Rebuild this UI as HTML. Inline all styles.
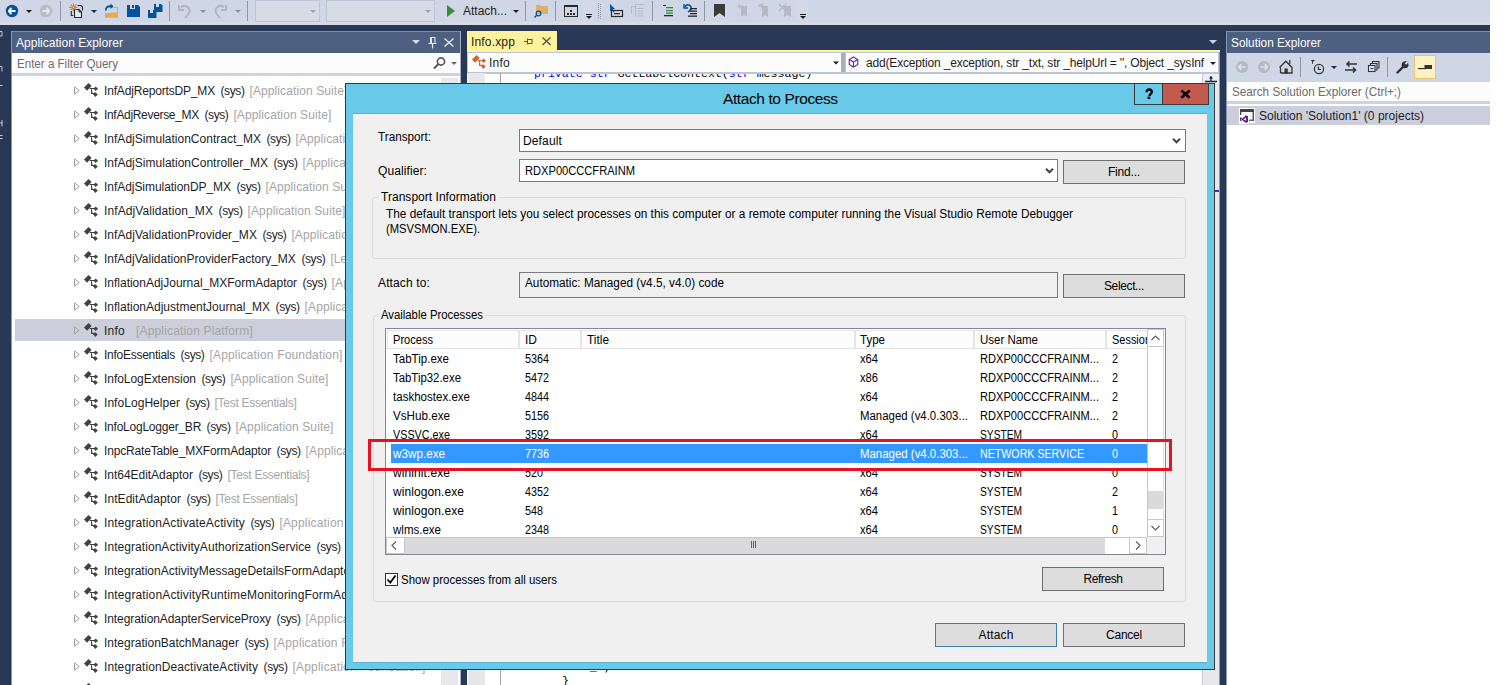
<!DOCTYPE html>
<html><head><meta charset="utf-8">
<style>
*{box-sizing:border-box;margin:0;padding:0}
html,body{width:1512px;height:685px;overflow:hidden;background:#fff;font-family:"Liberation Sans",sans-serif;font-size:12px;color:#1e1e1e}
.a{position:absolute}
#app{position:absolute;left:0;top:0;width:1490px;height:685px;background:#293955;overflow:hidden}
.ti{position:absolute;height:24px;line-height:24px;color:#1e1e1e;white-space:nowrap}
.ti .g{color:#a5a5a5}
.lbl{position:absolute;white-space:nowrap;color:#000}
.lv{position:absolute;white-space:nowrap;color:#000}
.btn{position:absolute;background:#dddddd;border:1px solid #707070;text-align:center;color:#000}
</style></head><body>
<div id="app">
<div class="a" style="left:0;top:0;width:1490px;height:25px;background:#cfd6e5"></div>
<svg class="a" style="left:0;top:0" width="1490" height="25" viewBox="0 0 1490 25">
<rect x="0" y="22" width="1490" height="3" fill="#d6dbe7"></rect>
<!-- back -->
<circle cx="12" cy="11" r="6.2" fill="#00539c"></circle>
<path d="M8.5 11h7M8.5 11l3-3M8.5 11l3 3" stroke="#fff" stroke-width="1.8" fill="none"></path>
<path d="M26 10h6l-3 3z" fill="#1e1e1e"></path>
<circle cx="46" cy="11" r="6.2" fill="#b6bcc8"></circle>
<path d="M49.5 11h-7M49.5 11l-3-3M49.5 11l-3 3" stroke="#e4e7ee" stroke-width="1.8" fill="none"></path>
<rect x="60" y="1" width="1" height="20" fill="#8f97a6"></rect>
<!-- new project -->
<path d="M77.5 5.5h3.5l1.5 1.5v3.5" fill="none" stroke="#2a2a2a" stroke-width="1.1"></path>
<path d="M71.3 11v4.5h2" fill="none" stroke="#2a2a2a" stroke-width="1.1"></path>
<path d="M74.5 9.5h4.5l2.5 2.5v5.5h-7z" fill="#e6e8f0" stroke="#2a2a2a" stroke-width="1.1"></path>
<path d="M79 9.5v2.5h2.5" fill="none" stroke="#2a2a2a" stroke-width="1"></path>
<g stroke="#c27d1a" stroke-width="1.1"><path d="M73.4 3.5v2M73.4 9.3v2M69.5 7.4h2M75.3 7.4h2M70.7 4.7l1.2 1.2M74.9 8.9l1.2 1.2M70.7 10.1l1.2-1.2M74.9 5.9l1.2-1.2"></path></g>
<circle cx="73.4" cy="7.4" r="1.4" fill="none" stroke="#c27d1a" stroke-width="1.1"></circle>
<path d="M91 10h6l-3 3z" fill="#1c2a48"></path>
<!-- open -->
<path d="M112 7.5h5.5v10" fill="none" stroke="#dcac5a" stroke-width="1.1"></path>
<path d="M105 13h6l1 -0.5h5.5v5.3H105z" fill="#e3ab52"></path>
<path d="M106 10.5c-0.5-3 1.5-4.5 5-4.2" fill="none" stroke="#00539c" stroke-width="1.8"></path>
<path d="M110.5 3.5l3 2.8-3 2.8z" fill="#00539c"></path>
<!-- save -->
<path d="M127 5h11l2 2v10h-13z" fill="#00539c"></path>
<rect x="130" y="5" width="5" height="4" fill="#cfd6e5"></rect><rect x="132" y="5" width="2" height="3" fill="#00539c"></rect>
<!-- save all -->
<path d="M154 4h7l1.5 1.5v6.5h-8.5z" fill="#00539c"></path>
<rect x="156" y="4" width="3" height="3" fill="#cfd6e5"></rect>
<path d="M148 10h7l1.5 1.5v6.5h-8.5z" fill="#00539c"></path>
<rect x="150" y="10" width="3" height="3" fill="#cfd6e5"></rect>
<rect x="169" y="1" width="1" height="20" fill="#8f97a6"></rect>
<!-- undo -->
<path d="M181 7c5-3 10 1 8 6l-4 5" fill="none" stroke="#b0b6c2" stroke-width="2"></path>
<path d="M179 5v5h5" fill="none" stroke="#b0b6c2" stroke-width="2"></path>
<path d="M200 10h6l-3 3z" fill="#8a8f99"></path>
<path d="M224 7c-5-3-10 1-8 6l4 5" fill="none" stroke="#b0b6c2" stroke-width="2"></path>
<path d="M226 5v5h-5" fill="none" stroke="#b0b6c2" stroke-width="2"></path>
<path d="M235 10h6l-3 3z" fill="#8a8f99"></path>
<rect x="247" y="1" width="1" height="20" fill="#8f97a6"></rect>
<!-- combos -->
<rect x="255.5" y="0.5" width="64" height="21" fill="#d6dbe6" stroke="#bdc5d6"></rect>
<path d="M310 10h6l-3 3z" fill="#9aa1ad"></path>
<rect x="326.5" y="0.5" width="108" height="21" fill="#d6dbe6" stroke="#bdc5d6"></rect>
<path d="M425 10h6l-3 3z" fill="#9aa1ad"></path>
<!-- play -->
<path d="M447 5l8 6-8 6z" fill="#388a34"></path>
<path d="M513 10h6l-3 3z" fill="#1e1e1e"></path>
<rect x="525" y="1" width="1" height="20" fill="#8f97a6"></rect>
<!-- folder search -->
<path d="M536 5h4l1 1h7v8h-12z" fill="#dcb067"></path>
<circle cx="538.5" cy="13.5" r="2.3" fill="none" stroke="#00539c" stroke-width="1.3"></circle>
<path d="M537 15l-2.5 2.5" stroke="#00539c" stroke-width="1.5"></path>
<rect x="555" y="1" width="1" height="20" fill="#8f97a6"></rect>
<!-- window icon -->
<rect x="564.5" y="5.5" width="13" height="11" fill="none" stroke="#2a2a2a"></rect>
<rect x="564" y="5" width="14" height="2" fill="#2a2a2a"></rect>
<rect x="570" y="10" width="2" height="2" fill="#2a2a2a"></rect><rect x="567" y="13" width="2" height="2" fill="#2a2a2a"></rect><rect x="570" y="13" width="2" height="2" fill="#2a2a2a"></rect><rect x="573" y="13" width="2" height="2" fill="#2a2a2a"></rect>
<rect x="583" y="0" width="11" height="23" fill="#d3d9e6"></rect>
<rect x="586" y="14" width="6" height="1" fill="#1e1e1e"></rect><path d="M586 16h6l-3 3z" fill="#1e1e1e"></path>
<!-- gripper -->
<g fill="#8f97a6"><rect x="598" y="3" width="1" height="1"></rect><rect x="600" y="4" width="1" height="1"></rect><rect x="598" y="5" width="1" height="1"></rect><rect x="600" y="6" width="1" height="1"></rect><rect x="598" y="7" width="1" height="1"></rect><rect x="600" y="8" width="1" height="1"></rect><rect x="598" y="9" width="1" height="1"></rect><rect x="600" y="10" width="1" height="1"></rect><rect x="598" y="11" width="1" height="1"></rect><rect x="600" y="12" width="1" height="1"></rect><rect x="598" y="13" width="1" height="1"></rect><rect x="600" y="14" width="1" height="1"></rect><rect x="598" y="15" width="1" height="1"></rect><rect x="600" y="16" width="1" height="1"></rect><rect x="598" y="17" width="1" height="1"></rect><rect x="600" y="18" width="1" height="1"></rect></g>
<!-- cursor icon -->
<path d="M610 4l5 5-2 0 1.5 3-1 .5-1.5-3-2 2z" fill="#00539c"></path>
<rect x="611.5" y="10.5" width="11" height="6" fill="none" stroke="#2a2a2a" stroke-width="1.2"></rect>
<rect x="614" y="13" width="6" height="1.2" fill="#2a2a2a"></rect>
<!-- disabled list -->
<g fill="none" stroke="#b5bbc6"><path d="M631.5 6.5v7M631.5 6.5h4M635.5 4.5h8M637.5 8.5h6M637.5 11h6M637.5 13.5h6M637.5 16h6M635.5 4.5v12"></path></g>
<rect x="652" y="1" width="1" height="20" fill="#8f97a6"></rect>
<!-- indent -->
<g fill="#2a2a2a"><rect x="663" y="5" width="3" height="1"></rect><rect x="664" y="15" width="9" height="1.3"></rect></g>
<g fill="#388a34"><rect x="666" y="7" width="7" height="1.3"></rect><rect x="666" y="10" width="7" height="1.3"></rect><rect x="666" y="12.5" width="7" height="1.3"></rect></g>
<!-- undo indent -->
<path d="M685 7c1-3 5-3 6 0s-2 4-3 5" fill="none" stroke="#00539c" stroke-width="1.6"></path>
<path d="M684 4v4h4" fill="none" stroke="#00539c" stroke-width="1.4"></path>
<g fill="#2a2a2a"><rect x="690" y="8" width="7" height="1.3"></rect><rect x="690" y="10.5" width="7" height="1.3"></rect><rect x="690" y="13" width="7" height="1.3"></rect><rect x="688" y="15.5" width="9" height="1.3"></rect></g>
<rect x="704" y="1" width="1" height="20" fill="#8f97a6"></rect>
<!-- bookmark -->
<path d="M714 4h11v13l-5.5-4-5.5 4z" fill="#3b3b3b"></path>
<g fill="#b5bbc6"><path d="M741 6h6v11l-3-2-3 2z"></path><path d="M737 6l3-2v1.5h3v2h-3V9z"></path>
<path d="M762 6h6v11l-3-2-3 2z"></path><path d="M764 5l-3-2v1.5h-3v2h3V8z"></path>
<path d="M784 6h7v11l-3.5-2-3.5 2z"></path><path d="M779 4l7 7" stroke="#b5bbc6" stroke-width="1.4"></path><path d="M786 4l-7 7" stroke="#b5bbc6" stroke-width="1.4"></path></g>
<rect x="797" y="0" width="11" height="23" fill="#d3d9e6"></rect>
<rect x="800" y="14" width="6" height="1" fill="#1e1e1e"></rect><path d="M800 16h6l-3 3z" fill="#1e1e1e"></path>
</svg>

<div class="a" style="left: 463px; top: 4px; font-size: 12px; color: rgb(30, 30, 30); white-space: nowrap; transform: scaleX(0.9993); transform-origin: 0px 0px;">Attach...</div>

<svg class="a" style="left:0;top:25px" width="4" height="120" viewBox="0 25 4 120"><g fill="none" stroke="#c3c9d6" stroke-width="1"><path d="M0 31.5h2v4.5h-2"></path><path d="M0 66.5h2v5"></path><path d="M0 85.5h2.5"></path><path d="M0 123h2.5M2 120v6.5"></path><path d="M0 135.5h2.5M0 138.5h2.5"></path></g></svg>
<!-- Application Explorer -->
<div class="a" style="left:11px;top:31px;width:450px;height:654px;background:#fff;border-left:1px solid #8796b4;border-right:1px solid #a4b0c8;overflow:hidden">
  <div class="a" style="left:0;top:0;width:449px;height:22px;background:#4d6082;border-top:1px solid #7e8eae"></div>
  <div class="a" style="left: 4px; top: 5px; color: rgb(255, 255, 255); white-space: nowrap; letter-spacing: 0.01px;">Application Explorer</div>
  <svg class="a" style="left:400px;top:0" width="50" height="22" viewBox="0 0 50 22">
    <path d="M0 9h8l-4 4z" fill="#d5dae4"></path>
    <path d="M18.5 6.5h4.5v6h-4.5z" fill="none" stroke="#e6e9ef" stroke-width="1.1"></path><rect x="18" y="6" width="2" height="6.5" fill="#e6e9ef"></rect><path d="M16.5 12.5h8M20.5 12.5v5" stroke="#e6e9ef" stroke-width="1.2"></path>
    <path d="M32.5 7.5l9 8M41.5 7.5l-9 8" stroke="#e6e9ef" stroke-width="1.4"></path>
  </svg>
  <div class="a" style="left:1px;top:22px;width:447px;height:20px;background:#fcfcfc"></div>
  <div class="a" style="left: 5px; top: 26px; color: rgb(109, 109, 109); white-space: nowrap; transform: scaleX(0.9646); transform-origin: 0px 0px;">Enter a Filter Query</div>
  <svg class="a" style="left:420px;top:22px" width="28" height="20" viewBox="0 0 28 20">
    <circle cx="9" cy="8.5" r="3.6" fill="none" stroke="#555" stroke-width="1.6"></circle><path d="M6.5 11l-4.5 4.5" stroke="#555" stroke-width="2"></path>
    <path d="M19 9h6l-3 3z" fill="#666"></path>
  </svg>
  <div class="a" style="left:0;top:42px;width:448px;height:3px;background:#ccd3e2"></div>
  <div class="a" style="left:429px;top:47px;width:17px;height:607px;background:#e8e8ec"></div>
  
<div class="a" style="left:0;top:47px;width:449px;height:24px"><svg class="a" style="left:62px;top:8px" width="6" height="9" viewBox="0 0 6 9"><path d="M0.5 0.8v7.4l4.6-3.7z" fill="none" stroke="#a0a0a0" stroke-width="1"></path></svg><svg class="a" style="left:71px;top:4px" width="16" height="16" viewBox="0 0 16 16"><path d="M5.6 0.95L8.65 4L4 8.65L0.95 5.6z" fill="#424242"></path><path d="M6.7 6.5H12.5M8.6 6.5V11.4H12" fill="none" stroke="#424242" stroke-width="1.1"></path><path d="M12.7 4.5l2.3 2.3-2.3 2.3-2.3-2.3z" fill="#424242"></path><path d="M12.4 10.3l2.3 2.3-2.3 2.3-2.3-2.3z" fill="#424242"></path></svg><div class="ti" style="left: 92px; top: 1px; letter-spacing: -0.17px;">InfAdjReportsDP_MX<span style="margin-left: 5.5px; letter-spacing: -0.4px;">(sys)</span><span class="g" style="margin-left: 5px; letter-spacing: 0.1px;">[Application Suite]</span></div></div>
<div class="a" style="left:0;top:71px;width:449px;height:24px"><svg class="a" style="left:62px;top:8px" width="6" height="9" viewBox="0 0 6 9"><path d="M0.5 0.8v7.4l4.6-3.7z" fill="none" stroke="#a0a0a0" stroke-width="1"></path></svg><svg class="a" style="left:71px;top:4px" width="16" height="16" viewBox="0 0 16 16"><path d="M5.6 0.95L8.65 4L4 8.65L0.95 5.6z" fill="#424242"></path><path d="M6.7 6.5H12.5M8.6 6.5V11.4H12" fill="none" stroke="#424242" stroke-width="1.1"></path><path d="M12.7 4.5l2.3 2.3-2.3 2.3-2.3-2.3z" fill="#424242"></path><path d="M12.4 10.3l2.3 2.3-2.3 2.3-2.3-2.3z" fill="#424242"></path></svg><div class="ti" style="left: 92px; top: 1px; letter-spacing: -0.32px;">InfAdjReverse_MX<span style="margin-left: 5.5px; letter-spacing: -0.4px;">(sys)</span><span class="g" style="margin-left: 5px; letter-spacing: 0.1px;">[Application Suite]</span></div></div>
<div class="a" style="left:0;top:95px;width:449px;height:24px"><svg class="a" style="left:62px;top:8px" width="6" height="9" viewBox="0 0 6 9"><path d="M0.5 0.8v7.4l4.6-3.7z" fill="none" stroke="#a0a0a0" stroke-width="1"></path></svg><svg class="a" style="left:71px;top:4px" width="16" height="16" viewBox="0 0 16 16"><path d="M5.6 0.95L8.65 4L4 8.65L0.95 5.6z" fill="#424242"></path><path d="M6.7 6.5H12.5M8.6 6.5V11.4H12" fill="none" stroke="#424242" stroke-width="1.1"></path><path d="M12.7 4.5l2.3 2.3-2.3 2.3-2.3-2.3z" fill="#424242"></path><path d="M12.4 10.3l2.3 2.3-2.3 2.3-2.3-2.3z" fill="#424242"></path></svg><div class="ti" style="left: 92px; top: 1px; letter-spacing: 0.01px;">InfAdjSimulationContract_MX<span style="margin-left: 5.5px; letter-spacing: -0.4px;">(sys)</span><span class="g" style="margin-left: 5px; letter-spacing: 0.1px;">[Application Suite]</span></div></div>
<div class="a" style="left:0;top:119px;width:449px;height:24px"><svg class="a" style="left:62px;top:8px" width="6" height="9" viewBox="0 0 6 9"><path d="M0.5 0.8v7.4l4.6-3.7z" fill="none" stroke="#a0a0a0" stroke-width="1"></path></svg><svg class="a" style="left:71px;top:4px" width="16" height="16" viewBox="0 0 16 16"><path d="M5.6 0.95L8.65 4L4 8.65L0.95 5.6z" fill="#424242"></path><path d="M6.7 6.5H12.5M8.6 6.5V11.4H12" fill="none" stroke="#424242" stroke-width="1.1"></path><path d="M12.7 4.5l2.3 2.3-2.3 2.3-2.3-2.3z" fill="#424242"></path><path d="M12.4 10.3l2.3 2.3-2.3 2.3-2.3-2.3z" fill="#424242"></path></svg><div class="ti" style="left: 92px; top: 1px; letter-spacing: 0.02px;">InfAdjSimulationController_MX<span style="margin-left: 5.5px; letter-spacing: -0.4px;">(sys)</span><span class="g" style="margin-left: 5px; letter-spacing: 0.1px;">[Application Suite]</span></div></div>
<div class="a" style="left:0;top:143px;width:449px;height:24px"><svg class="a" style="left:62px;top:8px" width="6" height="9" viewBox="0 0 6 9"><path d="M0.5 0.8v7.4l4.6-3.7z" fill="none" stroke="#a0a0a0" stroke-width="1"></path></svg><svg class="a" style="left:71px;top:4px" width="16" height="16" viewBox="0 0 16 16"><path d="M5.6 0.95L8.65 4L4 8.65L0.95 5.6z" fill="#424242"></path><path d="M6.7 6.5H12.5M8.6 6.5V11.4H12" fill="none" stroke="#424242" stroke-width="1.1"></path><path d="M12.7 4.5l2.3 2.3-2.3 2.3-2.3-2.3z" fill="#424242"></path><path d="M12.4 10.3l2.3 2.3-2.3 2.3-2.3-2.3z" fill="#424242"></path></svg><div class="ti" style="left: 92px; top: 1px; letter-spacing: -0.05px;">InfAdjSimulationDP_MX<span style="margin-left: 5.5px; letter-spacing: -0.4px;">(sys)</span><span class="g" style="margin-left: 5px; letter-spacing: 0.1px;">[Application Suite]</span></div></div>
<div class="a" style="left:0;top:167px;width:449px;height:24px"><svg class="a" style="left:62px;top:8px" width="6" height="9" viewBox="0 0 6 9"><path d="M0.5 0.8v7.4l4.6-3.7z" fill="none" stroke="#a0a0a0" stroke-width="1"></path></svg><svg class="a" style="left:71px;top:4px" width="16" height="16" viewBox="0 0 16 16"><path d="M5.6 0.95L8.65 4L4 8.65L0.95 5.6z" fill="#424242"></path><path d="M6.7 6.5H12.5M8.6 6.5V11.4H12" fill="none" stroke="#424242" stroke-width="1.1"></path><path d="M12.7 4.5l2.3 2.3-2.3 2.3-2.3-2.3z" fill="#424242"></path><path d="M12.4 10.3l2.3 2.3-2.3 2.3-2.3-2.3z" fill="#424242"></path></svg><div class="ti" style="left: 92px; top: 1px; letter-spacing: 0.1px;">InfAdjValidation_MX<span style="margin-left: 5.5px; letter-spacing: -0.4px;">(sys)</span><span class="g" style="margin-left: 5px; letter-spacing: 0.1px;">[Application Suite]</span></div></div>
<div class="a" style="left:0;top:191px;width:449px;height:24px"><svg class="a" style="left:62px;top:8px" width="6" height="9" viewBox="0 0 6 9"><path d="M0.5 0.8v7.4l4.6-3.7z" fill="none" stroke="#a0a0a0" stroke-width="1"></path></svg><svg class="a" style="left:71px;top:4px" width="16" height="16" viewBox="0 0 16 16"><path d="M5.6 0.95L8.65 4L4 8.65L0.95 5.6z" fill="#424242"></path><path d="M6.7 6.5H12.5M8.6 6.5V11.4H12" fill="none" stroke="#424242" stroke-width="1.1"></path><path d="M12.7 4.5l2.3 2.3-2.3 2.3-2.3-2.3z" fill="#424242"></path><path d="M12.4 10.3l2.3 2.3-2.3 2.3-2.3-2.3z" fill="#424242"></path></svg><div class="ti" style="left: 92px; top: 1px; letter-spacing: 0.04px;">InfAdjValidationProvider_MX<span style="margin-left: 5.5px; letter-spacing: -0.4px;">(sys)</span><span class="g" style="margin-left: 5px; letter-spacing: 0.1px;">[Application Suite]</span></div></div>
<div class="a" style="left:0;top:215px;width:449px;height:24px"><svg class="a" style="left:62px;top:8px" width="6" height="9" viewBox="0 0 6 9"><path d="M0.5 0.8v7.4l4.6-3.7z" fill="none" stroke="#a0a0a0" stroke-width="1"></path></svg><svg class="a" style="left:71px;top:4px" width="16" height="16" viewBox="0 0 16 16"><path d="M5.6 0.95L8.65 4L4 8.65L0.95 5.6z" fill="#424242"></path><path d="M6.7 6.5H12.5M8.6 6.5V11.4H12" fill="none" stroke="#424242" stroke-width="1.1"></path><path d="M12.7 4.5l2.3 2.3-2.3 2.3-2.3-2.3z" fill="#424242"></path><path d="M12.4 10.3l2.3 2.3-2.3 2.3-2.3-2.3z" fill="#424242"></path></svg><div class="ti" style="left: 92px; top: 1px; letter-spacing: 0px;">InfAdjValidationProviderFactory_MX<span style="margin-left: 5.5px; letter-spacing: -0.4px;">(sys)</span><span class="g" style="margin-left: 5px; letter-spacing: -0.05px;">[Legacy]</span></div></div>
<div class="a" style="left:0;top:239px;width:449px;height:24px"><svg class="a" style="left:62px;top:8px" width="6" height="9" viewBox="0 0 6 9"><path d="M0.5 0.8v7.4l4.6-3.7z" fill="none" stroke="#a0a0a0" stroke-width="1"></path></svg><svg class="a" style="left:71px;top:4px" width="16" height="16" viewBox="0 0 16 16"><path d="M5.6 0.95L8.65 4L4 8.65L0.95 5.6z" fill="#424242"></path><path d="M6.7 6.5H12.5M8.6 6.5V11.4H12" fill="none" stroke="#424242" stroke-width="1.1"></path><path d="M12.7 4.5l2.3 2.3-2.3 2.3-2.3-2.3z" fill="#424242"></path><path d="M12.4 10.3l2.3 2.3-2.3 2.3-2.3-2.3z" fill="#424242"></path></svg><div class="ti" style="left: 92px; top: 1px; letter-spacing: -0.01px;">InflationAdjJournal_MXFormAdaptor<span style="margin-left: 5.5px; letter-spacing: -0.4px;">(sys)</span><span class="g" style="margin-left: 5px; letter-spacing: 0.1px;">[Application Suite]</span></div></div>
<div class="a" style="left:0;top:263px;width:449px;height:24px"><svg class="a" style="left:62px;top:8px" width="6" height="9" viewBox="0 0 6 9"><path d="M0.5 0.8v7.4l4.6-3.7z" fill="none" stroke="#a0a0a0" stroke-width="1"></path></svg><svg class="a" style="left:71px;top:4px" width="16" height="16" viewBox="0 0 16 16"><path d="M5.6 0.95L8.65 4L4 8.65L0.95 5.6z" fill="#424242"></path><path d="M6.7 6.5H12.5M8.6 6.5V11.4H12" fill="none" stroke="#424242" stroke-width="1.1"></path><path d="M12.7 4.5l2.3 2.3-2.3 2.3-2.3-2.3z" fill="#424242"></path><path d="M12.4 10.3l2.3 2.3-2.3 2.3-2.3-2.3z" fill="#424242"></path></svg><div class="ti" style="left: 92px; top: 1px; letter-spacing: 0px;">InflationAdjustmentJournal_MX<span style="margin-left: 5.5px; letter-spacing: -0.4px;">(sys)</span><span class="g" style="margin-left: 5px; letter-spacing: 0.1px;">[Application Suite]</span></div></div>
<div class="a" style="left:0;top:287px;width:449px;height:24px"><div class="a" style="left:3px;top:1px;width:441px;height:22px;background:#cccedb"></div><svg class="a" style="left:62px;top:8px" width="6" height="9" viewBox="0 0 6 9"><path d="M0.5 0.8v7.4l4.6-3.7z" fill="none" stroke="#a0a0a0" stroke-width="1"></path></svg><svg class="a" style="left:71px;top:4px" width="16" height="16" viewBox="0 0 16 16"><path d="M5.6 0.95L8.65 4L4 8.65L0.95 5.6z" fill="#424242"></path><path d="M6.7 6.5H12.5M8.6 6.5V11.4H12" fill="none" stroke="#424242" stroke-width="1.1"></path><path d="M12.7 4.5l2.3 2.3-2.3 2.3-2.3-2.3z" fill="#424242"></path><path d="M12.4 10.3l2.3 2.3-2.3 2.3-2.3-2.3z" fill="#424242"></path></svg><div class="ti" style="left: 92px; top: 1px; letter-spacing: 0.25px;">Info<span class="g" style="margin-left: 11px; letter-spacing: 0.16px;">[Application Platform]</span></div></div>
<div class="a" style="left:0;top:311px;width:449px;height:24px"><svg class="a" style="left:62px;top:8px" width="6" height="9" viewBox="0 0 6 9"><path d="M0.5 0.8v7.4l4.6-3.7z" fill="none" stroke="#a0a0a0" stroke-width="1"></path></svg><svg class="a" style="left:71px;top:4px" width="16" height="16" viewBox="0 0 16 16"><path d="M5.6 0.95L8.65 4L4 8.65L0.95 5.6z" fill="#424242"></path><path d="M6.7 6.5H12.5M8.6 6.5V11.4H12" fill="none" stroke="#424242" stroke-width="1.1"></path><path d="M12.7 4.5l2.3 2.3-2.3 2.3-2.3-2.3z" fill="#424242"></path><path d="M12.4 10.3l2.3 2.3-2.3 2.3-2.3-2.3z" fill="#424242"></path></svg><div class="ti" style="left: 92px; top: 1px; letter-spacing: -0.27px;">InfoEssentials<span style="margin-left: 5.5px; letter-spacing: -0.4px;">(sys)</span><span class="g" style="margin-left: 5px; letter-spacing: 0.18px;">[Application Foundation]</span></div></div>
<div class="a" style="left:0;top:335px;width:449px;height:24px"><svg class="a" style="left:62px;top:8px" width="6" height="9" viewBox="0 0 6 9"><path d="M0.5 0.8v7.4l4.6-3.7z" fill="none" stroke="#a0a0a0" stroke-width="1"></path></svg><svg class="a" style="left:71px;top:4px" width="16" height="16" viewBox="0 0 16 16"><path d="M5.6 0.95L8.65 4L4 8.65L0.95 5.6z" fill="#424242"></path><path d="M6.7 6.5H12.5M8.6 6.5V11.4H12" fill="none" stroke="#424242" stroke-width="1.1"></path><path d="M12.7 4.5l2.3 2.3-2.3 2.3-2.3-2.3z" fill="#424242"></path><path d="M12.4 10.3l2.3 2.3-2.3 2.3-2.3-2.3z" fill="#424242"></path></svg><div class="ti" style="left: 92px; top: 1px; letter-spacing: -0.05px;">InfoLogExtension<span style="margin-left: 5.5px; letter-spacing: -0.4px;">(sys)</span><span class="g" style="margin-left: 5px; letter-spacing: 0.1px;">[Application Suite]</span></div></div>
<div class="a" style="left:0;top:359px;width:449px;height:24px"><svg class="a" style="left:62px;top:8px" width="6" height="9" viewBox="0 0 6 9"><path d="M0.5 0.8v7.4l4.6-3.7z" fill="none" stroke="#a0a0a0" stroke-width="1"></path></svg><svg class="a" style="left:71px;top:4px" width="16" height="16" viewBox="0 0 16 16"><path d="M5.6 0.95L8.65 4L4 8.65L0.95 5.6z" fill="#424242"></path><path d="M6.7 6.5H12.5M8.6 6.5V11.4H12" fill="none" stroke="#424242" stroke-width="1.1"></path><path d="M12.7 4.5l2.3 2.3-2.3 2.3-2.3-2.3z" fill="#424242"></path><path d="M12.4 10.3l2.3 2.3-2.3 2.3-2.3-2.3z" fill="#424242"></path></svg><div class="ti" style="left: 92px; top: 1px; letter-spacing: 0.05px;">InfoLogHelper<span style="margin-left: 5.5px; letter-spacing: -0.4px;">(sys)</span><span class="g" style="margin-left: 5px; letter-spacing: -0.28px;">[Test Essentials]</span></div></div>
<div class="a" style="left:0;top:383px;width:449px;height:24px"><svg class="a" style="left:62px;top:8px" width="6" height="9" viewBox="0 0 6 9"><path d="M0.5 0.8v7.4l4.6-3.7z" fill="none" stroke="#a0a0a0" stroke-width="1"></path></svg><svg class="a" style="left:71px;top:4px" width="16" height="16" viewBox="0 0 16 16"><path d="M5.6 0.95L8.65 4L4 8.65L0.95 5.6z" fill="#424242"></path><path d="M6.7 6.5H12.5M8.6 6.5V11.4H12" fill="none" stroke="#424242" stroke-width="1.1"></path><path d="M12.7 4.5l2.3 2.3-2.3 2.3-2.3-2.3z" fill="#424242"></path><path d="M12.4 10.3l2.3 2.3-2.3 2.3-2.3-2.3z" fill="#424242"></path></svg><div class="ti" style="left: 92px; top: 1px; letter-spacing: -0.23px;">InfoLogLogger_BR<span style="margin-left: 5.5px; letter-spacing: -0.4px;">(sys)</span><span class="g" style="margin-left: 5px; letter-spacing: 0.1px;">[Application Suite]</span></div></div>
<div class="a" style="left:0;top:407px;width:449px;height:24px"><svg class="a" style="left:62px;top:8px" width="6" height="9" viewBox="0 0 6 9"><path d="M0.5 0.8v7.4l4.6-3.7z" fill="none" stroke="#a0a0a0" stroke-width="1"></path></svg><svg class="a" style="left:71px;top:4px" width="16" height="16" viewBox="0 0 16 16"><path d="M5.6 0.95L8.65 4L4 8.65L0.95 5.6z" fill="#424242"></path><path d="M6.7 6.5H12.5M8.6 6.5V11.4H12" fill="none" stroke="#424242" stroke-width="1.1"></path><path d="M12.7 4.5l2.3 2.3-2.3 2.3-2.3-2.3z" fill="#424242"></path><path d="M12.4 10.3l2.3 2.3-2.3 2.3-2.3-2.3z" fill="#424242"></path></svg><div class="ti" style="left: 92px; top: 1px; letter-spacing: -0.16px;">InpcRateTable_MXFormAdaptor<span style="margin-left: 5.5px; letter-spacing: -0.4px;">(sys)</span><span class="g" style="margin-left: 5px; letter-spacing: 0.1px;">[Application Suite]</span></div></div>
<div class="a" style="left:0;top:431px;width:449px;height:24px"><svg class="a" style="left:62px;top:8px" width="6" height="9" viewBox="0 0 6 9"><path d="M0.5 0.8v7.4l4.6-3.7z" fill="none" stroke="#a0a0a0" stroke-width="1"></path></svg><svg class="a" style="left:71px;top:4px" width="16" height="16" viewBox="0 0 16 16"><path d="M5.6 0.95L8.65 4L4 8.65L0.95 5.6z" fill="#424242"></path><path d="M6.7 6.5H12.5M8.6 6.5V11.4H12" fill="none" stroke="#424242" stroke-width="1.1"></path><path d="M12.7 4.5l2.3 2.3-2.3 2.3-2.3-2.3z" fill="#424242"></path><path d="M12.4 10.3l2.3 2.3-2.3 2.3-2.3-2.3z" fill="#424242"></path></svg><div class="ti" style="left: 92px; top: 1px; letter-spacing: -0.03px;">Int64EditAdaptor<span style="margin-left: 5.5px; letter-spacing: -0.4px;">(sys)</span><span class="g" style="margin-left: 5px; letter-spacing: -0.28px;">[Test Essentials]</span></div></div>
<div class="a" style="left:0;top:455px;width:449px;height:24px"><svg class="a" style="left:62px;top:8px" width="6" height="9" viewBox="0 0 6 9"><path d="M0.5 0.8v7.4l4.6-3.7z" fill="none" stroke="#a0a0a0" stroke-width="1"></path></svg><svg class="a" style="left:71px;top:4px" width="16" height="16" viewBox="0 0 16 16"><path d="M5.6 0.95L8.65 4L4 8.65L0.95 5.6z" fill="#424242"></path><path d="M6.7 6.5H12.5M8.6 6.5V11.4H12" fill="none" stroke="#424242" stroke-width="1.1"></path><path d="M12.7 4.5l2.3 2.3-2.3 2.3-2.3-2.3z" fill="#424242"></path><path d="M12.4 10.3l2.3 2.3-2.3 2.3-2.3-2.3z" fill="#424242"></path></svg><div class="ti" style="left: 92px; top: 1px; letter-spacing: 0.07px;">IntEditAdaptor<span style="margin-left: 5.5px; letter-spacing: -0.4px;">(sys)</span><span class="g" style="margin-left: 5px; letter-spacing: -0.28px;">[Test Essentials]</span></div></div>
<div class="a" style="left:0;top:479px;width:449px;height:24px"><svg class="a" style="left:62px;top:8px" width="6" height="9" viewBox="0 0 6 9"><path d="M0.5 0.8v7.4l4.6-3.7z" fill="none" stroke="#a0a0a0" stroke-width="1"></path></svg><svg class="a" style="left:71px;top:4px" width="16" height="16" viewBox="0 0 16 16"><path d="M5.6 0.95L8.65 4L4 8.65L0.95 5.6z" fill="#424242"></path><path d="M6.7 6.5H12.5M8.6 6.5V11.4H12" fill="none" stroke="#424242" stroke-width="1.1"></path><path d="M12.7 4.5l2.3 2.3-2.3 2.3-2.3-2.3z" fill="#424242"></path><path d="M12.4 10.3l2.3 2.3-2.3 2.3-2.3-2.3z" fill="#424242"></path></svg><div class="ti" style="left: 92px; top: 1px; letter-spacing: 0.13px;">IntegrationActivateActivity<span style="margin-left: 5.5px; letter-spacing: -0.4px;">(sys)</span><span class="g" style="margin-left: 5px; letter-spacing: 0.18px;">[Application Foundation]</span></div></div>
<div class="a" style="left:0;top:503px;width:449px;height:24px"><svg class="a" style="left:62px;top:8px" width="6" height="9" viewBox="0 0 6 9"><path d="M0.5 0.8v7.4l4.6-3.7z" fill="none" stroke="#a0a0a0" stroke-width="1"></path></svg><svg class="a" style="left:71px;top:4px" width="16" height="16" viewBox="0 0 16 16"><path d="M5.6 0.95L8.65 4L4 8.65L0.95 5.6z" fill="#424242"></path><path d="M6.7 6.5H12.5M8.6 6.5V11.4H12" fill="none" stroke="#424242" stroke-width="1.1"></path><path d="M12.7 4.5l2.3 2.3-2.3 2.3-2.3-2.3z" fill="#424242"></path><path d="M12.4 10.3l2.3 2.3-2.3 2.3-2.3-2.3z" fill="#424242"></path></svg><div class="ti" style="left: 92px; top: 1px; letter-spacing: 0.06px;">IntegrationActivityAuthorizationService<span style="margin-left: 5.5px; letter-spacing: -0.4px;">(sys)</span><span class="g" style="margin-left: 5px; letter-spacing: 0.18px;">[Application Foundation]</span></div></div>
<div class="a" style="left:0;top:527px;width:449px;height:24px"><svg class="a" style="left:62px;top:8px" width="6" height="9" viewBox="0 0 6 9"><path d="M0.5 0.8v7.4l4.6-3.7z" fill="none" stroke="#a0a0a0" stroke-width="1"></path></svg><svg class="a" style="left:71px;top:4px" width="16" height="16" viewBox="0 0 16 16"><path d="M5.6 0.95L8.65 4L4 8.65L0.95 5.6z" fill="#424242"></path><path d="M6.7 6.5H12.5M8.6 6.5V11.4H12" fill="none" stroke="#424242" stroke-width="1.1"></path><path d="M12.7 4.5l2.3 2.3-2.3 2.3-2.3-2.3z" fill="#424242"></path><path d="M12.4 10.3l2.3 2.3-2.3 2.3-2.3-2.3z" fill="#424242"></path></svg><div class="ti" style="left: 92px; top: 1px; letter-spacing: 0px;">IntegrationActivityMessageDetailsFormAdaptor<span style="margin-left: 5.5px; letter-spacing: -0.4px;">(sys)</span><span class="g" style="margin-left: 5px; letter-spacing: 0.18px;">[Application Foundation]</span></div></div>
<div class="a" style="left:0;top:551px;width:449px;height:24px"><svg class="a" style="left:62px;top:8px" width="6" height="9" viewBox="0 0 6 9"><path d="M0.5 0.8v7.4l4.6-3.7z" fill="none" stroke="#a0a0a0" stroke-width="1"></path></svg><svg class="a" style="left:71px;top:4px" width="16" height="16" viewBox="0 0 16 16"><path d="M5.6 0.95L8.65 4L4 8.65L0.95 5.6z" fill="#424242"></path><path d="M6.7 6.5H12.5M8.6 6.5V11.4H12" fill="none" stroke="#424242" stroke-width="1.1"></path><path d="M12.7 4.5l2.3 2.3-2.3 2.3-2.3-2.3z" fill="#424242"></path><path d="M12.4 10.3l2.3 2.3-2.3 2.3-2.3-2.3z" fill="#424242"></path></svg><div class="ti" style="left: 92px; top: 1px; letter-spacing: 0.14px;">IntegrationActivityRuntimeMonitoringFormAdaptor<span style="margin-left: 5.5px; letter-spacing: -0.4px;">(sys)</span><span class="g" style="margin-left: 5px; letter-spacing: 0.18px;">[Application Foundation]</span></div></div>
<div class="a" style="left:0;top:575px;width:449px;height:24px"><svg class="a" style="left:62px;top:8px" width="6" height="9" viewBox="0 0 6 9"><path d="M0.5 0.8v7.4l4.6-3.7z" fill="none" stroke="#a0a0a0" stroke-width="1"></path></svg><svg class="a" style="left:71px;top:4px" width="16" height="16" viewBox="0 0 16 16"><path d="M5.6 0.95L8.65 4L4 8.65L0.95 5.6z" fill="#424242"></path><path d="M6.7 6.5H12.5M8.6 6.5V11.4H12" fill="none" stroke="#424242" stroke-width="1.1"></path><path d="M12.7 4.5l2.3 2.3-2.3 2.3-2.3-2.3z" fill="#424242"></path><path d="M12.4 10.3l2.3 2.3-2.3 2.3-2.3-2.3z" fill="#424242"></path></svg><div class="ti" style="left: 92px; top: 1px; letter-spacing: -0.08px;">IntegrationAdapterServiceProxy<span style="margin-left: 5.5px; letter-spacing: -0.4px;">(sys)</span><span class="g" style="margin-left: 5px; letter-spacing: 0.18px;">[Application Foundation]</span></div></div>
<div class="a" style="left:0;top:599px;width:449px;height:24px"><svg class="a" style="left:62px;top:8px" width="6" height="9" viewBox="0 0 6 9"><path d="M0.5 0.8v7.4l4.6-3.7z" fill="none" stroke="#a0a0a0" stroke-width="1"></path></svg><svg class="a" style="left:71px;top:4px" width="16" height="16" viewBox="0 0 16 16"><path d="M5.6 0.95L8.65 4L4 8.65L0.95 5.6z" fill="#424242"></path><path d="M6.7 6.5H12.5M8.6 6.5V11.4H12" fill="none" stroke="#424242" stroke-width="1.1"></path><path d="M12.7 4.5l2.3 2.3-2.3 2.3-2.3-2.3z" fill="#424242"></path><path d="M12.4 10.3l2.3 2.3-2.3 2.3-2.3-2.3z" fill="#424242"></path></svg><div class="ti" style="left: 92px; top: 1px; letter-spacing: 0.01px;">IntegrationBatchManager<span style="margin-left: 5.5px; letter-spacing: -0.4px;">(sys)</span><span class="g" style="margin-left: 5px; letter-spacing: 0.18px;">[Application Foundation]</span></div></div>
<div class="a" style="left:0;top:623px;width:449px;height:24px"><svg class="a" style="left:62px;top:8px" width="6" height="9" viewBox="0 0 6 9"><path d="M0.5 0.8v7.4l4.6-3.7z" fill="none" stroke="#a0a0a0" stroke-width="1"></path></svg><svg class="a" style="left:71px;top:4px" width="16" height="16" viewBox="0 0 16 16"><path d="M5.6 0.95L8.65 4L4 8.65L0.95 5.6z" fill="#424242"></path><path d="M6.7 6.5H12.5M8.6 6.5V11.4H12" fill="none" stroke="#424242" stroke-width="1.1"></path><path d="M12.7 4.5l2.3 2.3-2.3 2.3-2.3-2.3z" fill="#424242"></path><path d="M12.4 10.3l2.3 2.3-2.3 2.3-2.3-2.3z" fill="#424242"></path></svg><div class="ti" style="left: 92px; top: 1px; letter-spacing: 0.09px;">IntegrationDeactivateActivity<span style="margin-left: 5.5px; letter-spacing: -0.4px;">(sys)</span><span class="g" style="margin-left: 5px; letter-spacing: 0.18px;">[Application Foundation]</span></div></div>
<div class="a" style="left:0;top:647px;width:449px;height:24px"><svg class="a" style="left:62px;top:8px" width="6" height="9" viewBox="0 0 6 9"><path d="M0.5 0.8v7.4l4.6-3.7z" fill="none" stroke="#a0a0a0" stroke-width="1"></path></svg><svg class="a" style="left:71px;top:4px" width="16" height="16" viewBox="0 0 16 16"><path d="M5.6 0.95L8.65 4L4 8.65L0.95 5.6z" fill="#424242"></path><path d="M6.7 6.5H12.5M8.6 6.5V11.4H12" fill="none" stroke="#424242" stroke-width="1.1"></path><path d="M12.7 4.5l2.3 2.3-2.3 2.3-2.3-2.3z" fill="#424242"></path><path d="M12.4 10.3l2.3 2.3-2.3 2.3-2.3-2.3z" fill="#424242"></path></svg><div class="ti" style="left: 92px; top: 1px; letter-spacing: 0.04px;">IntegrationFoo<span style="margin-left: 5.5px; letter-spacing: -0.4px;">(sys)</span><span class="g" style="margin-left: 5px; letter-spacing: 0.18px;">[Application Foundation]</span></div></div>
</div>

<!-- editor -->
<div class="a" style="left:467px;top:31px;width:90px;height:21px;background:#fff29d"></div>
<div class="a" style="left: 471px; top: 35px; white-space: nowrap; color: rgb(30, 30, 30); letter-spacing: 0.16px;">Info.xpp</div>
<svg class="a" style="left:520px;top:33px" width="36" height="16" viewBox="0 0 36 16">
  <path d="M4 8.5h3M7.5 5.5v6M7.5 6.5h4.5v4h-4.5" fill="none" stroke="#5a5440" stroke-width="1.1"></path>
  <path d="M22.5 4.5l8 7.5M30.5 4.5l-8 7.5" stroke="#5a5440" stroke-width="1.4"></path>
</svg>
<div class="a" style="left:467px;top:50px;width:753px;height:2px;background:#fff29d"></div>
<div class="a" style="left:467px;top:52px;width:753px;height:633px;background:#fff"></div>
<div class="a" style="left:534px;top:67px;white-space:pre;font-family:'Liberation Mono',monospace;font-size:11.6px;color:#000"><span style="color:#0000ff">private</span> <span style="color:#0000ff">str</span> GetLabelContext(<span style="color:#0000ff">str</span> message)</div>
<div class="a" style="left:467px;top:52px;width:753px;height:22px;background:#bcc5d6"></div>
<div class="a" style="left:468px;top:53px;width:373px;height:19px;background:#fcfcfc"></div>
<div class="a" style="left:841px;top:53px;width:4px;height:19px;background:#a6b0c4"></div>
<div class="a" style="left:846px;top:53px;width:372px;height:19px;background:#fcfcfc"></div>
<svg class="a" style="left:471px;top:54px" width="18" height="17" viewBox="0 0 18 17">
  <path d="M5.6 0.95L8.65 4L4 8.65L0.95 5.6z" fill="#d0652e"></path><path d="M6.7 6.5H12.5M8.6 6.5V11.4H12" fill="none" stroke="#d0652e" stroke-width="1.1"></path><path d="M12.7 4.5l2.3 2.3-2.3 2.3-2.3-2.3z" fill="#d0652e"></path><path d="M12.4 10.3l2.3 2.3-2.3 2.3-2.3-2.3z" fill="#d0652e"></path>
</svg>
<div class="a" style="left: 489px; top: 56px; white-space: nowrap; color: rgb(30, 30, 30); letter-spacing: 0.25px;">Info</div>
<svg class="a" style="left:832px;top:60px" width="8" height="6" viewBox="0 0 8 6"><path d="M1 1.5h6l-3 3z" fill="#1e1e1e"></path></svg>
<svg class="a" style="left:848px;top:56px" width="12" height="12" viewBox="0 0 12 12"><path d="M5.5 1l4.3 2.5v5L5.5 11 1.2 8.5v-5z M5.5 6L1.2 3.5M5.5 6l4.3-2.5M5.5 6v5" fill="none" stroke="#652d90" stroke-width="1.1"></path></svg>
<div class="a" style="left:866px;top:53px;width:341px;height:19px;overflow:hidden"><div class="a" style="left:0;top:3px;white-space:nowrap;color:#1e1e1e;letter-spacing:-0.17px">add(Exception _exception, str _txt, str _helpUrl = '', Object _sysInf</div></div>
<svg class="a" style="left:1209px;top:61px" width="8" height="6" viewBox="0 0 8 6"><path d="M1 1h6l-3 3z" fill="#1e1e1e"></path></svg>
<svg class="a" style="left:1207px;top:37px" width="12" height="8" viewBox="0 0 12 8"><path d="M2 3h8l-4 4z" fill="#cdd3df"></path></svg>
<div class="a" style="left:468px;top:73px;width:17px;height:612px;background:#e6e7e8"></div>
<div class="a" style="left:500px;top:73px;width:1px;height:612px;background:#a5a5a5"></div>
<div class="a" style="left:1202px;top:74px;width:17px;height:611px;background:#e8e8ec;border-left:1px solid #c4cad6"></div><div class="a" style="left:1203px;top:74px;width:16px;height:10px;background:#e9eefa"></div><div class="a" style="left:1219px;top:52px;width:1px;height:633px;background:#8a97b8"></div>
<svg class="a" style="left:1203px;top:73px" width="17" height="12" viewBox="0 0 17 12"><path d="M2 8.5h12M8 3.5v5" fill="none" stroke="#1e1e1e" stroke-width="1.3"></path><path d="M6 5.5l2-2.5 2 2.5z" fill="#1e1e1e"></path></svg>
<div class="a" style="left:562px;top:674px;white-space:pre;font-family:'Liberation Mono',monospace;font-size:11.6px;color:#000">}</div>
<div class="a" style="left:534px;top:661px;white-space:pre;font-family:'Liberation Mono',monospace;font-size:11.6px;color:#000">        _ ;</div>

<!-- solution explorer -->
<div class="a" style="left:1226px;top:31px;width:264px;height:654px;background:#fff;border-left:1px solid #8796b4">
  <div class="a" style="left:0;top:0;width:263px;height:22px;background:#4d6082;border-top:1px solid #7e8eae"></div>
  <div class="a" style="left: 4px; top: 5px; color: rgb(255, 255, 255); white-space: nowrap; transform: scaleX(0.9848); transform-origin: 0px 0px;">Solution Explorer</div>
  <div class="a" style="left:0;top:22px;width:263px;height:29px;background:#cfd6e5"></div>
  <div class="a" style="left:0;top:51px;width:263px;height:19px;background:#fcfcfc"></div>
  <div class="a" style="left: 5px; top: 54px; color: rgb(109, 109, 109); white-space: nowrap; transform: scaleX(0.9764); transform-origin: 0px 0px;">Search Solution Explorer (Ctrl+;)</div>
  <div class="a" style="left:0;top:70px;width:263px;height:3px;background:#ccd3e2"></div>
  <div class="a" style="left:0;top:75px;width:263px;height:19px;background:#cccedb"></div>
  <svg class="a" style="left:12px;top:77px" width="16" height="16" viewBox="0 0 16 16"><rect x="0" y="0" width="16" height="15" fill="#fff"></rect><rect x="2.3" y="4" width="11.3" height="7.5" fill="#f6f6f6"></rect><rect x="1" y="1" width="14" height="3" fill="#424242"></rect><rect x="13.6" y="1" width="1.3" height="12" fill="#424242"></rect><rect x="1" y="1" width="1.3" height="6" fill="#424242"></rect><rect x="10" y="11.6" width="5" height="1.2" fill="#424242"></rect><path d="M0 7h10v9H0z" fill="#fff"></path><path d="M6.8 7.2L9 8.2V14L6.8 15L3.2 11.9L2 13.2L1 12.6V9.8L2 9.2L3.2 10.5Z M6.8 9.5L4.6 11.2L6.8 12.8Z M2 10.6v1.4l0.8-0.7z" fill="#68217a" fill-rule="evenodd"></path></svg>
<div class="a" style="left: 32px; top: 78px; color: rgb(30, 30, 30); white-space: nowrap; letter-spacing: 0.01px;">Solution 'Solution1' (0 projects)</div>
</div>
</div>
<svg class="a" style="left:1226px;top:53px" width="264" height="28" viewBox="1226 53 264 28">
<circle cx="1242" cy="67" r="6" fill="#b4b9c4"></circle>
<path d="M1238.5 67h7M1238.5 67l2.8-2.8M1238.5 67l2.8 2.8" stroke="#dfe3ea" stroke-width="1.7" fill="none"></path>
<circle cx="1264" cy="67" r="6" fill="#b4b9c4"></circle>
<path d="M1267.5 67h-7M1267.5 67l-2.8-2.8M1267.5 67l-2.8 2.8" stroke="#dfe3ea" stroke-width="1.7" fill="none"></path>
<path d="M1280.5 73h11.5v-5.5M1280.5 73v-5.5M1279.5 67.5l6.3-6.3 6.5 6.5" fill="none" stroke="#333" stroke-width="1.3"></path>
<path d="M1289.8 60v4" stroke="#333" stroke-width="1.2"></path>
<rect x="1284.5" y="68.5" width="3.2" height="5" fill="#333"></rect>
<rect x="1300" y="57" width="1" height="20" fill="#8f97a6"></rect>
<path d="M1311 60h4l-2 2v2h-0.8v-2z" fill="#333"></path>
<circle cx="1319" cy="69" r="4.6" fill="none" stroke="#333" stroke-width="1.2"></circle>
<path d="M1318.5 66.5v3h2.5" fill="none" stroke="#333" stroke-width="1.2"></path>
<path d="M1331 66h6l-3 3z" fill="#1c2a48"></path>
<path d="M1357 64h-10M1349.5 61.5l-2.5 2.5 2.5 2.5" fill="none" stroke="#333" stroke-width="1.6"></path>
<path d="M1345 70h10.5M1353 67.5l2.5 2.5-2.5 2.5" fill="none" stroke="#333" stroke-width="1.6"></path>
<path d="M1372.5 63v-1.5h6.5v6.5h-1.5" fill="none" stroke="#333" stroke-width="1.1"></path><path d="M1370.5 65v-1.5h6.5v6.5h-1.5" fill="none" stroke="#333" stroke-width="1.1"></path>
<rect x="1368.5" y="65.5" width="6.5" height="6" fill="#e8ebf2" stroke="#333" stroke-width="1.1"></rect>
<rect x="1370.5" y="68" width="3" height="1.2" fill="#00539c"></rect>
<rect x="1387" y="57" width="1" height="20" fill="#8f97a6"></rect>
<path d="M1397.5 72.5l6-6" stroke="#333" stroke-width="2.4" stroke-linecap="round"></path>
<path d="M1403 67.5a3.6 3.6 0 1 1 5.5-4.5l-2.5 0.8-0.5 2.2 2.2 0.5 1.6-2" fill="#333"></path>
<circle cx="1405" cy="65" r="3.3" fill="#333"></circle>
<rect x="1405" y="62" width="3" height="2" fill="#cfd6e5" transform="rotate(-40 1406.5 63)"></rect>
<rect x="1414.5" y="55.5" width="21" height="23" fill="#fff3c2" stroke="#e7c66f"></rect>
<rect x="1418" y="68" width="8" height="1.2" fill="#333"></rect>
<rect x="1424.5" y="65" width="7.5" height="4" fill="#333"></rect>
</svg>

<div class="a" style="left:1490px;top:0;width:22px;height:685px;background:#fff"></div>
<div class="a" style="left:1227px;top:125px;width:285px;height:560px;background:#fff"></div>

<!-- dialog -->
<div class="a" style="left:1215px;top:190px;width:4px;height:2px;background:#1f3fc0"></div>
<div class="a" style="left:345px;top:83px;width:870px;height:587px;background:#68c9e9;border:1px solid #3a3a3a"></div>
<div class="a" style="left:353px;top:113px;width:854px;height:1px;background:#5eb0d4"></div>
<div class="a" style="left:353px;top:114px;width:854px;height:548px;background:#f0f0f0"></div>
<div class="a" style="left:353px;top:662px;width:854px;height:1px;background:#5eb0d4"></div>
<div class="a" style="left:723px;top:89.5px;font-size:15.5px;letter-spacing:-0.4px;color:#000;white-space:nowrap">Attach to Process</div>
<div class="a" style="left:1134px;top:84px;width:29px;height:21px;border:1px solid #3a3a3a;border-top:none;background:#68c9e9"></div>
<div class="a" style="left:1162px;top:84px;width:47px;height:21px;border:1px solid #3a3a3a;border-top:none;background:#c35a4f"></div>
<svg class="a" style="left:1134px;top:83px" width="75" height="22" viewBox="0 0 75 22">
  <path d="M12.6 9.3c0-1.9 1.1-2.8 2.6-2.8s2.6 0.9 2.6 2.4c0 1.8-2.3 2-2.3 4" fill="none" stroke="#000" stroke-width="2.3"></path>
  <rect x="13.6" y="13.6" width="2.6" height="2.4" fill="#000"></rect>
  <path d="M47.3 7.6l8.4 7.2M55.7 7.6l-8.4 7.2" stroke="#000" stroke-width="2.6"></path>
</svg>

<div class="lbl" style="left: 378px; top: 130px; transform: scaleX(0.977); transform-origin: 0px 0px;">Transport:</div>
<div class="a" style="left:519px;top:129px;width:667px;height:23px;background:#fff;border:1px solid #7a7a7a"></div>
<div class="lbl" style="left: 523px; top: 134px; letter-spacing: 0.14px;">Default</div>
<svg class="a" style="left:1170px;top:134px" width="12" height="12" viewBox="0 0 12 12"><path d="M3 4.8l3.5 3.5 3.5-3.5" fill="none" stroke="#444" stroke-width="2"></path></svg>

<div class="lbl" style="left: 378px; top: 164px; letter-spacing: 0.1px;">Qualifier:</div>
<div class="a" style="left:519px;top:159px;width:539px;height:23px;background:#fff;border:1px solid #7a7a7a"></div>
<div class="lbl" style="left: 525px; top: 164px; transform: scaleX(0.9268); transform-origin: 0px 0px;">RDXP00CCCFRAINM</div>
<svg class="a" style="left:1043px;top:164px" width="12" height="12" viewBox="0 0 12 12"><path d="M3 4.8l3.5 3.5 3.5-3.5" fill="none" stroke="#444" stroke-width="2"></path></svg>
<div class="btn" style="left: 1063px; top: 160px; width: 122px; height: 24px; line-height: 22px; letter-spacing: -0.19px;">Find...</div>

<div class="a" style="left:372px;top:197px;width:814px;height:62px;border:1px solid #dcdcdc;border-radius:3px"></div>
<div class="lbl" style="left: 379px; top: 190px; background: rgb(240, 240, 240); padding: 0px 2px; letter-spacing: 0.03px;">Transport Information</div>
<div class="lbl" style="left: 386px; top: 207px; transform: scaleX(0.9868); transform-origin: 0px 0px;">The default transport lets you select processes on this computer or a remote computer running the Visual Studio Remote Debugger</div>
<div class="lbl" style="left: 386px; top: 222px; transform: scaleX(0.9336); transform-origin: 0px 0px;">(MSVSMON.EXE).</div>

<div class="lbl" style="left: 378px; top: 276px; letter-spacing: 0.13px;">Attach to:</div>
<div class="a" style="left:519px;top:272px;width:539px;height:26px;background:#f0f0f0;border:1px solid #7a7a7a"></div>
<div class="lbl" style="left: 525px; top: 276px; transform: scaleX(0.9814); transform-origin: 0px 0px;">Automatic: Managed (v4.5, v4.0) code</div>
<div class="btn" style="left: 1063px; top: 274px; width: 122px; height: 24px; line-height: 22px; letter-spacing: -0.37px;">Select...</div>

<div class="a" style="left:373px;top:315px;width:813px;height:287px;border:1px solid #dcdcdc;border-radius:3px"></div>
<div class="lbl" style="left: 379px; top: 308px; background: rgb(240, 240, 240); padding: 0px 2px; transform: scaleX(0.9458); transform-origin: 0px 0px;">Available Processes</div>

<div class="a" style="left:385px;top:328px;width:781px;height:227px;background:#fff;border:1px solid #828790"></div>
<div class="a" style="left:386px;top:348px;width:761px;height:1px;background:#e5e5e5"></div>
<div class="a" style="left:387px;top:330px;width:760px;height:18px;background:#fcfcfc;border:1px solid #e5e5e5;border-width:1px 0 0 1px"></div>
<div class="a" style="left:518px;top:330px;width:2px;height:18px;background:#e5e5e5"></div>
<div class="a" style="left:580px;top:330px;width:2px;height:18px;background:#e5e5e5"></div>
<div class="a" style="left:854px;top:330px;width:2px;height:18px;background:#e5e5e5"></div>
<div class="a" style="left:973px;top:330px;width:2px;height:18px;background:#e5e5e5"></div>
<div class="a" style="left:1105px;top:330px;width:2px;height:18px;background:#e5e5e5"></div>
<div class="lv" style="left: 393px; top: 333px; transform: scaleX(0.9225); transform-origin: 0px 0px;">Process</div>
<div class="lv" style="left: 525px; top: 333px; letter-spacing: 0px;">ID</div>
<div class="lv" style="left: 587px; top: 333px; transform: scaleX(0.9895); transform-origin: 0px 0px;">Title</div>
<div class="lv" style="left: 860px; top: 333px; transform: scaleX(0.961); transform-origin: 0px 0px;">Type</div>
<div class="lv" style="left: 980px; top: 333px; transform: scaleX(0.9557); transform-origin: 0px 0px;">User Name</div>
<div class="a" style="left:1107px;top:329px;width:40px;height:19px;overflow:hidden"><div class="lv" style="left: 5px; top: 4px; transform: scaleX(0.9133); transform-origin: 0px 0px;">Session</div></div>
<div class="lv" style="left: 393px; top: 352px; color: rgb(0, 0, 0); transform: scaleX(0.9611); transform-origin: 0px 0px;">TabTip.exe</div>
<div class="lv" style="left: 525px; top: 352px; color: rgb(0, 0, 0); transform: scaleX(0.8988); transform-origin: 0px 0px;">5364</div>
<div class="lv" style="left: 860px; top: 352px; color: rgb(0, 0, 0); transform: scaleX(0.9298); transform-origin: 0px 0px;">x64</div>
<div class="lv" style="left: 980px; top: 352px; color: rgb(0, 0, 0); transform: scaleX(0.9247); transform-origin: 0px 0px;">RDXP00CCCFRAINM...</div>
<div class="lv" style="left: 1112px; top: 352px; color: rgb(0, 0, 0); transform: scaleX(0.8972); transform-origin: 0px 0px;">2</div>
<div class="lv" style="left: 393px; top: 371px; color: rgb(0, 0, 0); transform: scaleX(0.9496); transform-origin: 0px 0px;">TabTip32.exe</div>
<div class="lv" style="left: 525px; top: 371px; color: rgb(0, 0, 0); transform: scaleX(0.8988); transform-origin: 0px 0px;">5472</div>
<div class="lv" style="left: 860px; top: 371px; color: rgb(0, 0, 0); transform: scaleX(0.9298); transform-origin: 0px 0px;">x86</div>
<div class="lv" style="left: 980px; top: 371px; color: rgb(0, 0, 0); transform: scaleX(0.9247); transform-origin: 0px 0px;">RDXP00CCCFRAINM...</div>
<div class="lv" style="left: 1112px; top: 371px; color: rgb(0, 0, 0); transform: scaleX(0.8972); transform-origin: 0px 0px;">2</div>
<div class="lv" style="left: 393px; top: 390px; color: rgb(0, 0, 0); transform: scaleX(0.9619); transform-origin: 0px 0px;">taskhostex.exe</div>
<div class="lv" style="left: 525px; top: 390px; color: rgb(0, 0, 0); transform: scaleX(0.8988); transform-origin: 0px 0px;">4844</div>
<div class="lv" style="left: 860px; top: 390px; color: rgb(0, 0, 0); transform: scaleX(0.9298); transform-origin: 0px 0px;">x64</div>
<div class="lv" style="left: 980px; top: 390px; color: rgb(0, 0, 0); transform: scaleX(0.9247); transform-origin: 0px 0px;">RDXP00CCCFRAINM...</div>
<div class="lv" style="left: 1112px; top: 390px; color: rgb(0, 0, 0); transform: scaleX(0.8972); transform-origin: 0px 0px;">2</div>
<div class="lv" style="left: 393px; top: 409px; color: rgb(0, 0, 0); transform: scaleX(0.971); transform-origin: 0px 0px;">VsHub.exe</div>
<div class="lv" style="left: 525px; top: 409px; color: rgb(0, 0, 0); transform: scaleX(0.8988); transform-origin: 0px 0px;">5156</div>
<div class="lv" style="left: 860px; top: 409px; color: rgb(0, 0, 0); transform: scaleX(0.9522); transform-origin: 0px 0px;">Managed (v4.0.303...</div>
<div class="lv" style="left: 980px; top: 409px; color: rgb(0, 0, 0); transform: scaleX(0.9247); transform-origin: 0px 0px;">RDXP00CCCFRAINM...</div>
<div class="lv" style="left: 1112px; top: 409px; color: rgb(0, 0, 0); transform: scaleX(0.8972); transform-origin: 0px 0px;">2</div>
<div class="lv" style="left: 393px; top: 428px; color: rgb(0, 0, 0); transform: scaleX(0.8994); transform-origin: 0px 0px;">VSSVC.exe</div>
<div class="lv" style="left: 525px; top: 428px; color: rgb(0, 0, 0); transform: scaleX(0.8988); transform-origin: 0px 0px;">3592</div>
<div class="lv" style="left: 860px; top: 428px; color: rgb(0, 0, 0); transform: scaleX(0.9298); transform-origin: 0px 0px;">x64</div>
<div class="lv" style="left: 980px; top: 428px; color: rgb(0, 0, 0); transform: scaleX(0.8512); transform-origin: 0px 0px;">SYSTEM</div>
<div class="lv" style="left: 1112px; top: 428px; color: rgb(0, 0, 0); transform: scaleX(0.8972); transform-origin: 0px 0px;">0</div>
<div class="a" style="left:391px;top:444px;width:756px;height:19px;background:#3399ff"></div>
<div class="lv" style="left: 393px; top: 447px; color: rgb(255, 255, 255); transform: scaleX(0.9742); transform-origin: 0px 0px;">w3wp.exe</div>
<div class="lv" style="left: 525px; top: 447px; color: rgb(255, 255, 255); transform: scaleX(0.8988); transform-origin: 0px 0px;">7736</div>
<div class="lv" style="left: 860px; top: 447px; color: rgb(255, 255, 255); transform: scaleX(0.9522); transform-origin: 0px 0px;">Managed (v4.0.303...</div>
<div class="lv" style="left: 980px; top: 447px; color: rgb(255, 255, 255); transform: scaleX(0.8878); transform-origin: 0px 0px;">NETWORK SERVICE</div>
<div class="lv" style="left: 1112px; top: 447px; color: rgb(255, 255, 255); transform: scaleX(0.8972); transform-origin: 0px 0px;">0</div>
<div class="lv" style="left: 393px; top: 466px; color: rgb(0, 0, 0); letter-spacing: 0.09px;">wininit.exe</div>
<div class="lv" style="left: 525px; top: 466px; color: rgb(0, 0, 0); transform: scaleX(0.8986); transform-origin: 0px 0px;">520</div>
<div class="lv" style="left: 860px; top: 466px; color: rgb(0, 0, 0); transform: scaleX(0.9298); transform-origin: 0px 0px;">x64</div>
<div class="lv" style="left: 980px; top: 466px; color: rgb(0, 0, 0); transform: scaleX(0.8512); transform-origin: 0px 0px;">SYSTEM</div>
<div class="lv" style="left: 1112px; top: 466px; color: rgb(0, 0, 0); transform: scaleX(0.8972); transform-origin: 0px 0px;">0</div>
<div class="lv" style="left: 393px; top: 485px; color: rgb(0, 0, 0); letter-spacing: 0.08px;">winlogon.exe</div>
<div class="lv" style="left: 525px; top: 485px; color: rgb(0, 0, 0); transform: scaleX(0.8988); transform-origin: 0px 0px;">4352</div>
<div class="lv" style="left: 860px; top: 485px; color: rgb(0, 0, 0); transform: scaleX(0.9298); transform-origin: 0px 0px;">x64</div>
<div class="lv" style="left: 980px; top: 485px; color: rgb(0, 0, 0); transform: scaleX(0.8512); transform-origin: 0px 0px;">SYSTEM</div>
<div class="lv" style="left: 1112px; top: 485px; color: rgb(0, 0, 0); transform: scaleX(0.8972); transform-origin: 0px 0px;">2</div>
<div class="lv" style="left: 393px; top: 504px; color: rgb(0, 0, 0); letter-spacing: 0.08px;">winlogon.exe</div>
<div class="lv" style="left: 525px; top: 504px; color: rgb(0, 0, 0); transform: scaleX(0.8986); transform-origin: 0px 0px;">548</div>
<div class="lv" style="left: 860px; top: 504px; color: rgb(0, 0, 0); transform: scaleX(0.9298); transform-origin: 0px 0px;">x64</div>
<div class="lv" style="left: 980px; top: 504px; color: rgb(0, 0, 0); transform: scaleX(0.8512); transform-origin: 0px 0px;">SYSTEM</div>
<div class="lv" style="left: 1112px; top: 504px; color: rgb(0, 0, 0); transform: scaleX(0.8972); transform-origin: 0px 0px;">1</div>
<div class="lv" style="left: 393px; top: 523px; color: rgb(0, 0, 0); transform: scaleX(0.9597); transform-origin: 0px 0px;">wlms.exe</div>
<div class="lv" style="left: 525px; top: 523px; color: rgb(0, 0, 0); transform: scaleX(0.8988); transform-origin: 0px 0px;">2348</div>
<div class="lv" style="left: 860px; top: 523px; color: rgb(0, 0, 0); transform: scaleX(0.9298); transform-origin: 0px 0px;">x64</div>
<div class="lv" style="left: 980px; top: 523px; color: rgb(0, 0, 0); transform: scaleX(0.8512); transform-origin: 0px 0px;">SYSTEM</div>
<div class="lv" style="left: 1112px; top: 523px; color: rgb(0, 0, 0); transform: scaleX(0.8972); transform-origin: 0px 0px;">0</div>
<!-- v scrollbar -->
<div class="a" style="left:1147px;top:329px;width:17px;height:208px;background:#fff;border-left:1px solid #c8c8c8;border-right:1px solid #e0e0e0"></div>
<div class="a" style="left:1147px;top:329px;width:17px;height:18px;background:#fff;border:1px solid #c8c8c8"></div>
<svg class="a" style="left:1149px;top:333px" width="13" height="10" viewBox="0 0 13 10"><path d="M2.5 7l4-4 4 4" fill="none" stroke="#606060" stroke-width="1.2"></path></svg>
<div class="a" style="left:1148px;top:491px;width:15px;height:18px;background:#dadada"></div>
<div class="a" style="left:1147px;top:519px;width:17px;height:18px;background:#fff;border:1px solid #c8c8c8"></div>
<svg class="a" style="left:1149px;top:523px" width="13" height="10" viewBox="0 0 13 10"><path d="M2.5 3l4 4 4-4" fill="none" stroke="#606060" stroke-width="1.2"></path></svg>
<!-- h scrollbar -->
<div class="a" style="left:386px;top:537px;width:779px;height:17px;background:#e8e8e8;border-top:1px solid #c8c8c8"></div>
<div class="a" style="left:386px;top:537px;width:19px;height:17px;background:#fff;border:1px solid #c8c8c8"></div>
<svg class="a" style="left:388px;top:539px" width="14" height="13" viewBox="0 0 14 13"><path d="M8 2.5l-4 4 4 4" fill="none" stroke="#606060" stroke-width="1.2"></path></svg>
<div class="a" style="left:405px;top:538px;width:700px;height:16px;background:#dadada"></div>
<svg class="a" style="left:749px;top:541px" width="10" height="8" viewBox="0 0 10 8"><path d="M2.5 0v7M4.5 0v7M6.5 0v7" stroke="#606060" stroke-width="1"></path></svg>
<div class="a" style="left:1105px;top:538px;width:25px;height:16px;background:#fff"></div>
<div class="a" style="left:1129px;top:537px;width:18px;height:17px;background:#fff;border:1px solid #c8c8c8"></div>
<svg class="a" style="left:1131px;top:539px" width="14" height="13" viewBox="0 0 14 13"><path d="M5 2.5l4 4-4 4" fill="none" stroke="#606060" stroke-width="1.2"></path></svg>
<div class="a" style="left:1147px;top:537px;width:18px;height:17px;background:#f0f0f0"></div>

<!-- checkbox -->
<div class="a" style="left:385px;top:573px;width:13px;height:13px;background:#fff;border:1px solid #333"></div>
<svg class="a" style="left:385px;top:573px" width="13" height="13" viewBox="0 0 13 13"><path d="M2.5 6.5l2.8 3 5.2-7" fill="none" stroke="#000" stroke-width="1.8"></path></svg>
<div class="lbl" style="left: 401px; top: 573px; transform: scaleX(0.9547); transform-origin: 0px 0px;">Show processes from all users</div>
<div class="btn" style="left: 1042px; top: 567px; width: 122px; height: 24px; line-height: 22px; letter-spacing: -0.43px;">Refresh</div>

<div class="btn" style="left: 935px; top: 623px; width: 122px; height: 24px; line-height: 22px; border-color: rgb(60, 127, 177); letter-spacing: 0.16px;">Attach</div>
<div class="btn" style="left: 1063px; top: 623px; width: 122px; height: 24px; line-height: 22px; letter-spacing: -0.23px;">Cancel</div>

<!-- red highlight -->
<div class="a" style="left:368px;top:439px;width:804px;height:32px;border:3px solid #e81123"></div>


</body></html>
